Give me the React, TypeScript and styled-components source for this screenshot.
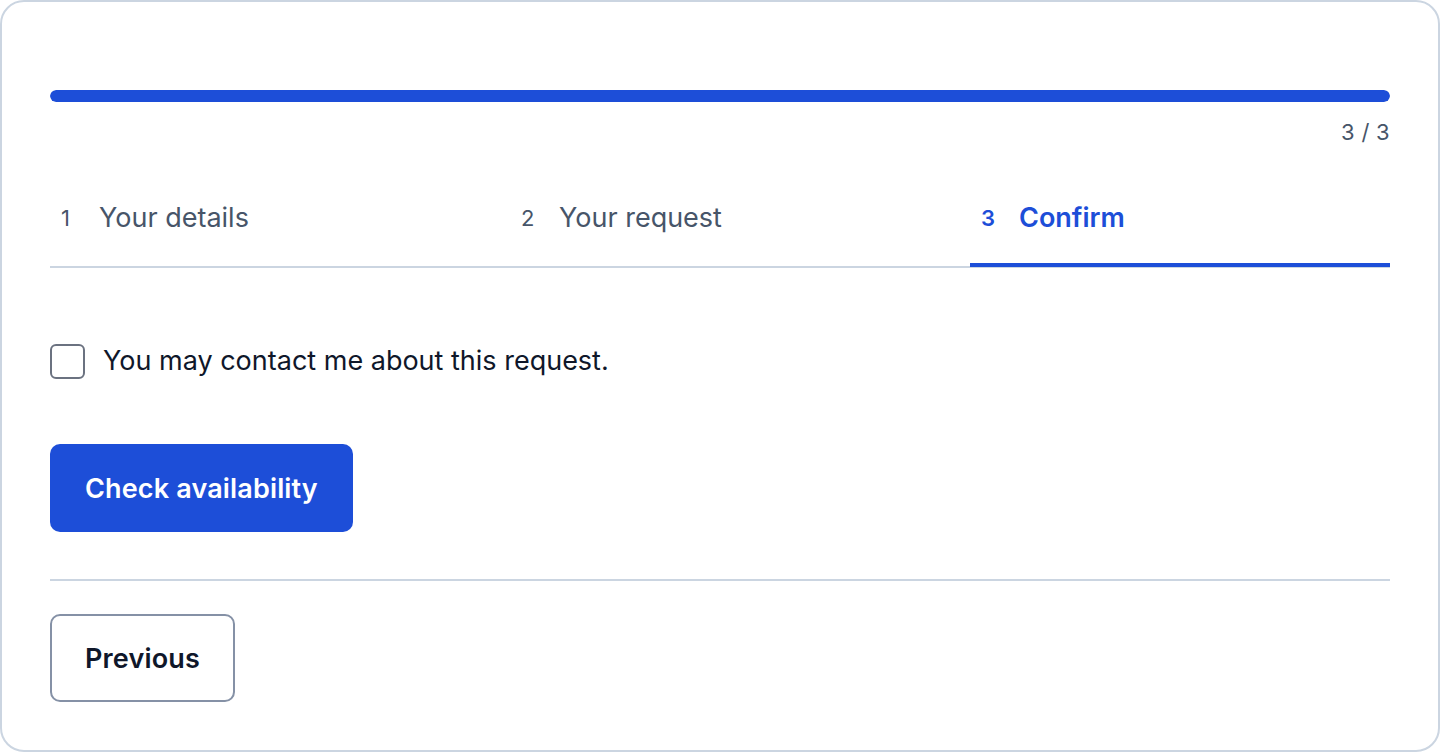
import styled, { createGlobalStyle } from 'styled-components';

const GlobalStyle = createGlobalStyle`
	* { box-sizing: border-box; }
	body {
		margin: 0;
		font-family: Inter, 'Noto Sans', 'Liberation Sans', sans-serif;
		background: #ffffff;
	}
`;

const steps = ['Your details', 'Your request', 'Confirm'];
const current = 3;

const App = () => {
	return (
		<>
			<GlobalStyle />
			<Card>
				<Progress>
					<ProgressFill style={{ width: `${(current / steps.length) * 100}%` }} />
				</Progress>
				<Counter>
					{current} / {steps.length}
				</Counter>
				<TabList>
					{steps.map((label, id) => (
						<Tab key={label} $active={id + 1 === current}>
							<TabNumber>{id + 1}</TabNumber>
							<TabLabel>{label}</TabLabel>
						</Tab>
					))}
				</TabList>
				<CheckRow>
					<Checkbox type='checkbox' />
					<span>You may contact me about this request.</span>
				</CheckRow>
				<PrimaryButton>Check availability</PrimaryButton>
				<Divider />
				<SecondaryButton>Previous</SecondaryButton>
			</Card>
		</>
	);
};

const Card = styled.section`
	width: 1440px;
	height: 752px;
	border: 2px solid #cbd5e1;
	border-radius: 24px;
	padding: 88px 48px 48px;
	display: flex;
	flex-direction: column;
	align-items: flex-start;
	background: #fff;
`;

const Progress = styled.div`
	width: 100%;
	height: 12px;
	border-radius: 6px;
	background: #e2e8f0;
	overflow: hidden;
`;

const ProgressFill = styled.div`
	height: 100%;
	background: #1d4ed8;
	border-radius: 6px;
`;

const Counter = styled.div`
	align-self: flex-end;
	margin-top: 15px;
	font-size: 22px;
	line-height: 30px;
	letter-spacing: 0.3px;
	color: #475569;
`;

const TabList = styled.div`
	width: 100%;
	display: flex;
	gap: 40px;
	margin-top: 31px;
	border-bottom: 2px solid #cbd5e1;
`;

const Tab = styled.div<{ $active: boolean }>`
	flex: 1;
	display: flex;
	align-items: center;
	padding: 20px 11px 25px;
	margin-bottom: -1px;
	border-bottom: 4px solid ${(p) => (p.$active ? '#1d4ed8' : 'transparent')};
	color: ${(p) => (p.$active ? '#1d4ed8' : '#475569')};
	font-weight: ${(p) => (p.$active ? 600 : 400)};
`;

const TabNumber = styled.span`
	width: 38px;
	font-size: 22px;
	line-height: 40px;
`;

const TabLabel = styled.span`
	font-size: 27px;
	line-height: 40px;
`;

const CheckRow = styled.label`
	display: flex;
	align-items: center;
	gap: 18px;
	margin-top: 73px;
	font-size: 27px;
	line-height: 40px;
	color: #0f172a;
`;

const Checkbox = styled.input`
	appearance: none;
	margin: 0;
	width: 35px;
	height: 35px;
	border: 2px solid #6b7280;
	border-radius: 6px;
	background: #fff;
`;

const PrimaryButton = styled.button`
	margin-top: 63px;
	height: 88px;
	padding: 0 35px;
	border: none;
	border-radius: 10px;
	background: #1d4ed8;
	color: #fff;
	font-family: inherit;
	font-size: 27px;
	font-weight: 600;
	letter-spacing: 0.15px;
`;

const Divider = styled.hr`
	width: 100%;
	margin: 47px 0 0;
	border: none;
	border-top: 2px solid #cbd5e1;
`;

const SecondaryButton = styled.button`
	margin-top: 33px;
	height: 88px;
	padding: 0 33px;
	border: 2px solid #8591a6;
	border-radius: 10px;
	background: #fff;
	color: #0f172a;
	font-family: inherit;
	font-size: 27px;
	font-weight: 600;
	letter-spacing: 0.15px;
`;

export default App;
